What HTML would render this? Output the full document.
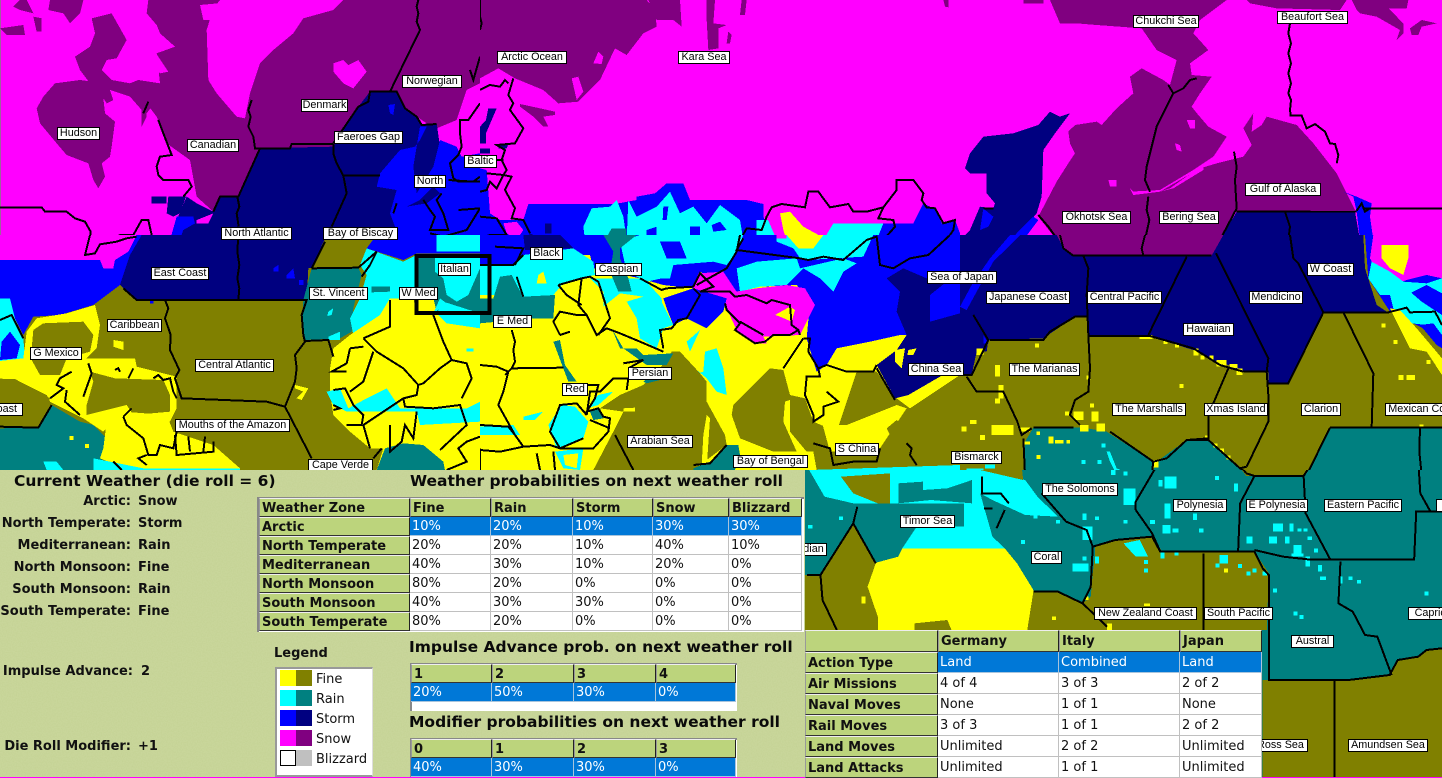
<!DOCTYPE html>
<html><head><meta charset="utf-8"><title>Weather</title>
<style>
html,body{margin:0;padding:0;width:1442px;height:777px;overflow:hidden;background:#f0f}
#map{position:absolute;left:0;top:0}
.y{fill:#ff0}.o{fill:#808000}.c{fill:#0ff}.t{fill:#008080}.b{fill:#00f}.n{fill:#000080}.m{fill:#f0f}.p{fill:#800080}
.l{fill:none;stroke:#000;stroke-width:2;vector-effect:non-scaling-stroke}
.L{position:absolute;box-sizing:border-box;height:13px;margin-top:1px;background:#fff;border:1px solid #000;font:10.8px/11px "Liberation Sans",sans-serif;color:#000;text-align:center;white-space:nowrap;overflow:hidden}
#panel{position:absolute;left:0;top:470px;width:805px;height:307px;background:#c9d69b;overflow:hidden}
.T{position:absolute;font:bold 15.5px/18px "DejaVu Sans",sans-serif;color:#0a0a0a;white-space:nowrap}
.K{position:absolute;margin-top:1px;font:bold 13px/16px "DejaVu Sans",sans-serif;color:#111;white-space:nowrap;text-align:right;width:131px;left:0}
.V{position:absolute;margin-top:1px;font:bold 13px/16px "DejaVu Sans",sans-serif;color:#111;white-space:nowrap;left:138px}
table{position:absolute;border-collapse:separate;border-spacing:0;table-layout:fixed;font:13px/15px "DejaVu Sans",sans-serif;color:#111}
td{box-sizing:border-box;padding:1px 0 0 2px;white-space:nowrap;overflow:hidden;background:#fff;border-right:1px solid #c0c0c0;border-bottom:1px solid #c0c0c0}
td.h,tr.s td.h{background:#bcd47c;color:#111;font-weight:bold;border-top:1px solid #eee;border-left:1px solid #999;border-right:1px solid #222;border-bottom:1px solid #333;padding-left:2px}
tr.s td{background:#0078d7;color:#fff;border-right:1px solid #a8c4dc;border-bottom:1px solid #a8c4dc}
</style></head><body>
<svg id="map" width="1442" height="777" viewBox="0 0 1442 777" shape-rendering="crispEdges">
<rect width="1442" height="777" fill="#f0f"/>
<rect x="0" y="0" width="1" height="470" fill="#a060a0"/>

<!-- Q1 -->
<svg x="0" y="0" width="480" height="240" viewBox="0 0 1440 720">
<polygon class="p" points="445,0 1440,0 1440,260 1400,290 1370,360 1310,385 1280,370 1250,350 1210,320 1190,275 1110,275 1075,320 1000,440 780,445 715,590 660,590 640,635 590,590 570,480 500,430 470,350 440,310 440,350 425,380 425,330 480,250 470,160 525,140 480,100 470,75 440,40"/>
<polygon class="m" points="620,90 640,25 660,0 1030,0 1000,30 910,55 880,100 820,150 780,190 750,280 735,355 710,350 650,280 625,240"/>
<polygon class="m" points="600,15 655,10 650,60 610,60"/>
<polygon class="m" points="1000,190 1030,180 1045,195 1075,180 1100,215 1060,265 1030,250 1000,215"/>
<polygon class="m" points="430,170 465,155 505,215 480,220"/>
<polygon class="p" points="165,250 240,240 310,250 330,270 340,300 320,310 310,295 315,340 345,365 335,440 330,470 305,490 315,530 295,565 280,540 265,490 200,465 170,430 120,370 110,325 130,290"/>
<polygon class="p" points="275,55 335,40 380,120 350,175 320,180 305,210 335,240 390,250 415,240 480,250 470,300 440,340 425,330 390,290 330,270 270,250 240,210 225,170 270,140 285,100"/>
<polygon class="p" points="40,20 60,0 80,0 100,40 60,30"/>
<polygon class="p" points="0,85 70,75 75,105 20,105"/>
<polygon class="p" points="100,50 125,55 125,95 110,95"/>
<polygon class="p" points="150,0 250,0 240,40 210,70 190,40 145,30"/>
<polygon class="m" points="1440,250 1400,270 1370,360 1315,385 1320,420 1370,440 1385,470 1440,460"/>
<polygon class="n" points="1110,275 1190,275 1215,325 1250,350 1265,375 1310,370 1320,440 1380,560 1200,640 1170,720 510,720 530,660 560,590 590,610 640,635 660,590 715,590 780,445 1000,440 1075,320"/>
<polygon class="b" points="1260,380 1280,380 1260,420 1245,440 1200,450 1140,520 1130,560 1190,570 1170,640 1200,720 1440,720 1440,460 1385,470 1370,440 1320,420 1300,500 1250,580 1240,500"/>
<polygon class="b" points="1165,315 1185,312 1180,345 1170,340"/>
<polygon class="b" points="510,720 530,650 580,650 585,670 550,690 540,720"/>
<polygon class="b" points="415,710 510,710 510,720 412,720"/>
<polygon class="n" points="455,590 500,590 500,610 455,610"/>
<polygon class="n" points="505,590 558,590 540,640 520,650 500,640"/>
<polygon class="m" points="590,660 640,640 625,670 590,670"/>
<polygon class="n" points="1220,620 1260,600 1300,560 1320,580 1280,610"/>
<polyline class="l" points="1255,0 1250,20 1255,40 1250,65 1260,90 1170,275"/>
<polyline class="l" points="755,300 745,330 752,350 745,380 760,410 765,445 870,445 875,432 1000,432"/>
<polyline class="l" points="780,445 715,590 660,590 640,635"/>
<polyline class="l" points="1000,432 1000,460 1010,490 1030,527 1040,580 995,680"/>
<polyline class="l" points="1030,527 1140,527"/>
<polyline class="l" points="712,590 718,620 710,640 716,680"/>
<polyline class="l" points="1000,430 1075,320 1105,305 1110,275 1190,275 1215,325 1250,350 1265,375 1310,372"/>
<polyline class="l" points="475,360 490,400 515,465 480,470 470,500 475,525 490,540 565,540 575,560 550,590"/>
<polyline class="l" points="0,622 125,622 135,635 200,635 225,655 255,665 272,695 272,720"/>
<polyline class="l" points="340,720 360,705 400,705 425,660 445,660 455,705"/>
<polyline class="l" points="445,305 430,340"/>
<polyline class="l" points="1440,310 1405,360 1380,360 1380,400 1385,440 1375,465 1350,490 1360,535 1375,545 1440,545"/>
<polyline class="l" points="1410,210 1420,240 1440,170"/>
<polyline class="l" points="1270,600 1290,630 1305,650 1290,690 1345,690 1330,640 1310,600 1325,580"/>
<polyline class="l" points="1345,540 1420,545 1440,530"/>
<polyline class="l" points="1375,630 1440,625 1400,690 1330,710 1290,700"/>
<polyline class="l" points="1190,610 1180,640"/>
</svg>

<!-- Q2 -->
<svg x="480" y="0" width="480" height="240" viewBox="0 0 1440 720">
<polygon class="p" points="0,0 500,0 525,30 530,80 490,100 440,165 405,145 360,240 325,275 295,305 235,310 190,270 105,235 55,205 0,235"/>
<polygon class="p" points="505,0 600,0 605,80 580,60 530,60"/>
<polygon class="m" points="340,190 355,155 370,170 365,192"/>
<polygon class="m" points="275,235 295,230 310,275 290,300"/>
<polygon class="p" points="680,0 705,0 700,70 740,75 715,85 715,145 685,150 680,60"/>
<polygon class="p" points="785,0 800,0 795,45 780,45"/>
<polygon class="p" points="1390,0 1405,0 1405,22 1395,20"/>
<polygon class="p" points="745,95 755,105 750,130 740,130"/>
<polygon class="p" points="120,312 180,325 225,335 225,345 190,350 205,380 190,380 160,350 120,320"/>
<polygon class="b" points="0,505 20,510 25,575 30,640 60,660 130,660 145,612 405,612 470,600 470,590 525,580 560,550 610,550 630,600 800,600 850,612 850,650 880,720 0,720"/>
<polygon class="m" points="25,550 75,570 105,630 95,655 60,660 30,640"/>
<polygon class="m" points="70,670 110,665 130,690 110,720 80,700"/>
<polygon class="n" points="0,380 18,360 25,325 50,325 18,400 18,430 0,430"/>
<polygon class="n" points="0,445 30,445 30,460 0,460"/>
<polygon class="n" points="55,432 85,432 80,445 55,445"/>
<polygon class="b" points="1000,720 1060,670 1300,670 1330,610 1370,630 1385,670 1425,660 1440,700 1440,720"/>
<polygon class="c" points="310,680 335,625 390,620 410,600 430,650 440,720 315,720"/>
<polygon class="c" points="445,600 470,650 530,620 570,575 600,640 640,620 680,670 720,615 780,660 790,720 440,720"/>
<polygon class="c" points="830,660 880,660 890,720 830,720"/>
<polygon class="c" points="1030,720 1060,670 1210,670 1190,720"/>
<polygon class="t" points="375,720 395,685 440,685 440,720"/>
<polygon class="m" points="860,650 875,622 905,612 975,622 985,575 1015,575 1050,622 1105,612 1120,635 1160,635 1210,622 1250,620 1300,670 1060,670 1030,720 890,720"/>
<polygon class="y" points="900,640 930,635 970,680 1025,710 1025,720 920,720 910,690"/>
<polygon class="b" points="500,690 530,680 530,705 500,705"/>
<polygon class="b" points="550,620 565,620 560,660 548,660"/>
<polygon class="b" points="630,680 660,680 660,720 630,720"/>
<polygon class="b" points="695,675 720,665 740,690 700,695"/>
<polygon class="n" points="135,720 150,700 170,710 170,720"/>
<polygon class="n" points="195,670 215,670 215,700 195,700"/>
<polygon class="n" points="195,710 230,710 230,720 195,720"/>
<polyline class="l" points="100,235 85,285 100,310 90,330 130,385 105,430 50,435 75,450 65,480 80,510 70,525 95,530 75,570 105,625 95,655 130,660 150,700"/>
<polyline class="l" points="0,270 30,255 60,260 75,240 85,250"/>
<polyline class="l" points="0,0 0,50 5,70 0,90"/>
<polyline class="l" points="0,480 70,480"/>
<polyline class="l" points="20,520 70,525 50,565 30,545 20,570 0,575"/>
<polyline class="l" points="0,650 50,655 80,705 30,705 0,715"/>
<polyline class="l" points="780,720 800,685 845,690 860,650 875,622 905,612 975,622 985,575 1015,575 1050,622 1105,612 1120,635 1160,635 1210,622 1195,655 1240,660 1245,680 1210,720"/>
<polyline class="l" points="1210,622 1250,570 1250,540 1300,540 1330,580 1325,600 1340,622 1365,625 1390,670 1425,660 1420,690 1400,720"/>
</svg>

<!-- Q3 -->
<svg x="960" y="0" width="482" height="240" viewBox="0 0 1446 720">
<polygon class="p" points="270,0 800,0 720,60 700,100 745,150 690,190 695,225 755,230 720,280 695,320 715,345 745,380 800,410 760,470 700,510 600,570 510,575 450,545 370,495 325,490 345,460 330,430 325,395 345,375 410,365 425,375 470,325 520,280 510,230 545,205 610,240 630,255 650,180 590,150 545,85 410,75 350,70 300,70"/>
<polygon class="p" points="850,385 880,340 875,395 905,375 920,350 1010,375 1060,430 1130,520 1185,630 830,632 775,720 290,720 235,650 290,545 325,490 370,495 450,545 510,575 600,575 720,505 770,490 810,480 850,470 875,435"/>
<polygon class="m" points="510,565 520,575 600,575 630,565 700,515 730,500 730,510 640,565 600,575 520,585"/>
<polygon class="m" points="445,540 470,540 470,560 450,560"/>
<polygon class="m" points="645,430 660,435 665,455 650,450"/>
<polygon class="m" points="680,360 705,360 705,385 690,385"/>
<polygon class="p" points="860,0 1160,0 1140,30 950,25 870,10"/>
<polygon class="p" points="1175,0 1345,0 1340,25 1285,25 1330,70 1330,100 1310,120 1320,90 1250,50 1200,40 1190,30"/>
<polygon class="p" points="1350,85 1385,60 1430,70 1385,80 1375,105 1355,105"/>
<polygon class="p" points="190,0 250,0 250,10 190,10"/>
<polygon class="n" points="235,375 270,335 300,350 330,340 285,400 250,450 245,590 230,640 180,700 150,720 0,720 30,690 60,620 100,625 105,610 80,580 80,520 30,520 15,505 30,460 70,410 160,400"/>
<polygon class="b" points="70,625 100,650 85,680 60,690"/>
<polygon class="b" points="150,720 220,650 235,660 190,720"/>
<polygon class="b" points="0,710 30,710 20,720 0,720"/>
<polygon class="n" points="830,635 1185,635 1200,720 780,720"/>
<polygon class="b" points="1150,575 1190,590 1235,610 1230,650 1240,720 1200,720 1190,635 1180,590"/>
<polyline class="l" points="990,70 985,100 993,130 985,160 993,190 985,220 993,250 985,280 993,300 990,330 992,347 1025,347 1040,385 1065,372 1095,395 1110,430 1125,432 1135,465 1130,490"/>
<polyline class="l" points="1210,625 1446,625"/>
<polyline class="l" points="1190,632 1205,610 1215,635 1230,625"/>
<polyline class="l" points="710,235 690,240 670,265 640,280 590,380 575,440 560,500 555,540 570,575"/>
<polyline class="l" points="565,590 560,630 568,660 555,720"/>
<polyline class="l" points="625,255 640,280"/>
<polyline class="l" points="822,455 830,500 825,540 830,625 780,720"/>
<polyline class="l" points="235,645 265,680 290,715"/>
<polyline class="l" points="830,635 1190,635"/>
<polyline class="l" points="975,635 990,680 985,720"/>
<polyline class="l" points="70,625 100,625"/>
</svg>

<!-- Q4 -->
<svg x="0" y="235" width="480" height="240" viewBox="0 0 1440 720">
<rect width="1440" height="720" class="o"/>
<polygon class="b" points="0,0 430,0 390,60 360,150 280,210 180,240 100,245 70,300 45,250 10,250 0,260"/>
<polygon class="m" points="0,0 410,0 385,50 345,75 340,100 310,100 300,75 0,75"/>
<polygon class="n" points="425,0 980,0 935,98 925,100 920,195 410,195 360,150 390,60"/>
<polygon class="b" points="450,195 460,195 460,205 450,205"/>
<polygon class="b" points="820,100 835,90 835,110 820,110"/>
<polygon class="b" points="860,120 880,100 885,130 860,130"/>
<polygon class="b" points="897,135 910,135 910,150 897,150"/>
<polygon class="c" points="0,190 30,190 45,250 70,310 75,370 0,380"/>
<polygon class="b" points="5,320 30,290 60,330 50,370 0,375"/>
<polygon class="y" points="0,378 70,370 80,290 110,250 200,235 285,210 300,270 290,340 260,370 405,370 410,395 530,425 530,520 510,560 340,560 310,590 250,550 150,500 140,480 60,440 0,430"/>
<polygon class="o" points="100,285 130,265 250,260 280,300 270,350 200,370 180,420 120,420 95,375 95,340"/>
<polygon class="o" points="260,510 280,440 270,410 345,430 490,435 510,480 510,530 400,540 380,510 260,540"/>
<polygon class="o" points="0,432 45,432 150,490 115,575 0,575"/>
<polygon class="o" points="325,310 370,300 400,370 340,370"/>
<polygon class="y" points="340,315 370,320 370,345 340,335"/>
<polygon class="t" points="0,580 115,578 155,510 240,560 280,570 320,610 305,680 280,705 0,705"/>
<polygon class="y" points="310,640 320,560 370,530 500,540 520,590 640,630 720,700 420,705 350,690 300,670"/>
<polygon class="c" points="280,670 430,700 720,700 720,705 280,705"/>
<polygon class="c" points="130,680 170,680 190,705 140,705"/>
<polygon class="y" points="208,603 220,603 220,615 208,615"/>
<polygon class="y" points="255,627 267,627 267,639 255,639"/>
<polygon class="o" points="400,495 440,495 440,505 400,505"/>
<polygon class="t" points="910,195 935,100 1075,98 1085,120 1060,220 1055,290 1020,310 915,315 905,280"/>
<polygon class="c" points="1080,90 1100,40 1210,80 1250,60 1250,190 1170,195 1140,240 1060,300 1050,250 1080,190 1100,120"/>
<polygon class="c" points="985,230 1000,220 995,240 982,243"/>
<polygon class="c" points="985,305 1020,290 1020,315 985,315"/>
<polygon class="t" points="1115,155 1170,155 1170,170 1115,172"/>
<polygon class="b" points="1130,0 1440,0 1440,55 1250,55 1210,75 1100,40"/>
<polygon class="c" points="1310,0 1440,0 1440,50 1310,50"/>
<polygon class="y" points="990,400 1000,340 1050,300 1140,240 1170,190 1240,190 1250,235 1440,235 1440,705 1130,705 1150,640 1110,640 1050,590 1000,540 990,470"/>
<polygon class="t" points="1250,60 1440,60 1440,280 1340,265 1310,235 1250,235"/>
<polygon class="c" points="1305,60 1440,60 1440,100 1405,180 1370,200 1340,180 1330,130 1305,110"/>
<polygon class="y" points="1250,190 1300,190 1310,230 1250,235"/>
<polygon class="c" points="1320,190 1340,205 1300,235"/>
<polygon class="c" points="1310,235 1330,200 1440,235 1440,280 1340,265"/>
<polygon class="c" points="980,470 1020,460 1045,520 1100,490 1160,460 1200,520 1260,520 1400,520 1440,500 1440,560 1260,570 1250,530 1040,530 1000,510"/>
<polygon class="t" points="1130,705 1155,640 1210,625 1270,630 1330,680 1335,705"/>
<polygon class="c" points="1400,340 1420,340 1420,350 1400,350"/>
<polygon class="y" points="885,450 925,460 905,495 890,490 910,470 885,460"/>
<polyline class="l" points="715,0 712,50 718,90 712,130 718,160 715,195"/>
<polyline class="l" points="370,160 410,195 920,195 905,240 910,300 915,320 885,360 890,400 885,440 855,515 800,500 545,490 525,430 538,405 510,345 512,300 495,250 505,220 495,195"/>
<polyline class="l" points="855,515 935,670"/>
<polyline class="l" points="915,318 985,315 1000,365"/>
<polyline class="l" points="935,100 1075,98 1130,50 1110,90 1085,125"/>
<polyline class="l" points="935,100 975,20"/>
<polyline class="l" points="0,575 115,578 155,510"/>
<polyline class="l" points="0,255 35,240 70,310"/>
<polyline class="l" points="270,0 255,60 285,55 300,28 350,20 380,10 410,5"/>
<polyline class="l" points="265,385 275,415 250,485"/>
<polyline class="l" points="215,410 180,430 170,450 190,460 150,490"/>
<polyline class="l" points="200,465 195,500 240,540"/>
<polyline class="l" points="345,405 355,400 360,410"/>
<polyline class="l" points="400,400 385,430"/>
<polyline class="l" points="460,430 475,420 490,435 510,430 520,470 530,490"/>
<polyline class="l" points="1090,310 1130,350 1170,375 1210,400 1255,450 1250,480 1210,490 1090,570"/>
<polyline class="l" points="1090,310 1170,275 1170,195"/>
<polyline class="l" points="1300,240 1330,320 1355,375 1400,385 1415,430 1385,490"/>
<polyline class="l" points="1355,375 1320,400 1270,445 1255,450"/>
<polyline class="l" points="1050,340 1090,335"/>
<polyline class="l" points="1050,340 1040,385 995,410 1040,410"/>
<polyline class="l" points="1120,350 1090,440 1050,470"/>
<polyline class="l" points="1000,465 1035,460 1060,510 1090,540 1085,570 1040,570"/>
<polyline class="l" points="1210,490 1215,515 1300,520 1380,510 1400,570 1320,645"/>
<polyline class="l" points="1090,570 1110,640"/>
<polyline class="l" points="1170,570 1170,650 1205,620 1215,570 1240,610 1250,530"/>
<polyline class="l" points="1440,605 1400,620 1375,640 1400,680 1340,705"/>
<polyline class="l" points="1000,510 1020,520 1000,525"/>
<polyline class="l" points="370,545 380,570 430,610 445,660 470,660 480,630 520,640 530,590"/>
<polyline class="l" points="370,545 395,520"/>
<polyline class="l" points="525,600 530,660 640,650 640,620"/>
<polyline class="l" points="565,605 570,650"/>
<polyline class="l" points="615,605 610,650"/>
<polyline class="l" points="440,660 415,670 440,690"/>
<polyline class="l" points="340,680 365,705"/>
<polyline class="l" points="1120,670 1145,640"/>
</svg>

<!-- Q5 -->
<svg x="480" y="235" width="480" height="240" viewBox="0 0 1440 720">
<rect width="1440" height="720" class="y"/>
<polygon class="b" points="0,0 1440,0 1440,300 1260,300 1170,320 1070,340 1040,390 1010,410 980,310 990,200 950,150 840,155 770,170 660,110 640,160 550,150 480,130 340,100 330,60 130,60 100,90 0,90"/>
<polygon class="n" points="130,0 240,0 280,40 135,45"/>
<polygon class="c" points="100,90 130,60 280,40 340,80 345,120 300,130 245,150 220,180 100,190 70,180 0,180 0,90"/>
<polygon class="t" points="60,125 95,120 110,150 130,185 225,180 220,250 160,250 0,265 0,190 40,190"/>
<polygon class="y" points="175,120 190,110 200,145 170,145"/>
<polygon class="c" points="330,130 490,130 545,190 550,280 530,340 480,310 470,250 440,200 490,185 420,175 370,215 370,170"/>
<polygon class="c" points="420,20 480,0 790,0 770,50 740,90 700,80 580,90 570,130 545,130 500,140 440,110"/>
<polygon class="b" points="540,20 600,20 620,70 560,70"/>
<polygon class="t" points="370,0 470,0 420,40 420,70 445,130 455,170 415,170 390,110 400,50"/>
<polygon class="c" points="890,0 1180,0 1150,65 980,75 960,70 940,40 890,20"/>
<polygon class="y" points="920,0 1030,0 1000,40 955,40"/>
<polygon class="m" points="890,0 920,0 920,10 890,10"/>
<polygon class="c" points="770,100 830,80 950,70 960,100 1090,70 1130,85 1090,110 1060,170 1020,130 970,100 920,150 840,155 780,170"/>
<polygon class="m" points="655,115 730,110 770,170 830,160 920,150 975,160 1005,210 970,280 960,300 850,305 860,325 820,325 770,285 740,220 735,200 660,190 635,170"/>
<polygon class="y" points="885,240 930,215 945,225 935,260 900,245"/>
<polygon class="y" points="870,315 905,305 910,318 865,320"/>
<polygon class="b" points="550,190 640,160 740,190 730,230 680,280 620,250 580,270 560,220"/>
<polygon class="c" points="545,200 580,270 550,280"/>
<polygon class="c" points="620,320 660,285 630,350"/>
<polygon class="c" points="675,350 710,340 730,400 740,480 710,470 680,430 615,375 640,420 670,410"/>
<polygon class="o" points="360,520 420,480 490,450 540,400 575,350 600,350 660,415 680,440 680,500 735,600 740,630 640,705 340,705 400,590 430,530"/>
<polygon class="y" points="430,520 465,518 465,530 430,530"/>
<polygon class="o" points="760,510 870,400 910,405 930,480 975,490 1000,560 1070,590 1130,410 1190,410 1250,490 1290,520 1440,420 1440,705 1010,705 1000,650 880,650 780,610 755,540"/>
<polygon class="y" points="915,500 930,495 930,590 980,650 950,650 910,560"/>
<polygon class="y" points="1020,540 1060,570 1100,570 1250,510 1280,520 1200,640 1050,650"/>
<polygon class="o" points="1220,580 1250,555 1280,580 1240,620"/>
<polygon class="y" points="670,600 680,540 690,550 680,700 665,690"/>
<polygon class="t" points="640,700 690,680 740,630 775,630 780,660 765,705 640,705"/>
<polygon class="n" points="1220,130 1270,100 1340,130 1400,140 1350,180 1350,260 1440,235 1440,390 1285,480 1245,490 1190,390 1250,345 1280,300 1250,230 1260,170"/>
<polygon class="y" points="1245,345 1275,340 1265,400 1245,380"/>
<polygon class="y" points="1285,345 1310,340 1300,360 1282,360"/>
<polygon class="t" points="220,320 240,315 255,390 290,440 265,440"/>
<polygon class="t" points="395,280 420,340 470,340 490,360 580,355 560,390 500,390 430,340"/>
<polygon class="t" points="500,445 560,430 540,400 490,440"/>
<polygon class="c" points="205,570 245,510 285,515 325,560 310,610 230,640"/>
<polygon class="c" points="0,575 100,570 120,600 0,600"/>
<polygon class="c" points="225,650 310,640 300,705 250,700"/>
<polygon class="y" points="250,660 295,655 290,700 255,690"/>
<polygon class="c" points="990,705 1440,690 1440,720 990,720"/>
<polygon class="c" points="130,545 190,530 165,555 130,555"/>
<polygon class="c" points="320,520 355,480 400,470 355,510"/>
<polygon class="t" points="330,530 360,520 370,550 340,555"/>
<polyline class="l" points="95,285 105,320 100,345 105,380 95,400 250,398"/>
<polyline class="l" points="0,390 50,395 85,410 70,470 55,510 105,600 130,635 210,630 240,640 310,610"/>
<polyline class="l" points="95,400 75,420"/>
<polyline class="l" points="0,570 85,575 105,600"/>
<polyline class="l" points="0,645 60,650 130,635"/>
<polyline class="l" points="170,655 180,705"/>
<polyline class="l" points="220,650 225,705"/>
<polyline class="l" points="240,300 220,260 240,230 290,240 320,240 350,300 380,280 420,295 480,320 550,350"/>
<polyline class="l" points="240,300 270,290"/>
<polyline class="l" points="110,125 130,185"/>
<polyline class="l" points="0,90 100,90 130,60"/>
<polyline class="l" points="235,150 305,130 330,125 355,140 390,250 355,300"/>
<polyline class="l" points="305,130 295,210 320,240"/>
<polyline class="l" points="305,210 260,180 235,150"/>
<polyline class="l" points="480,130 545,165 560,160 640,155 660,115 700,155 660,170 750,170 765,185 800,180 860,205 875,195 930,210 935,270 955,285 960,300"/>
<polyline class="l" points="640,160 660,180 620,250 595,255 575,280 540,285 550,340"/>
<polyline class="l" points="735,205 740,225 780,265 765,285 825,325 855,320 880,300 930,300 955,285"/>
<polyline class="l" points="780,260 850,300"/>
<polyline class="l" points="970,310 910,400"/>
<polyline class="l" points="970,310 990,310 985,350 1015,400 1040,390 1100,410 1180,410 1190,390"/>
<polyline class="l" points="1015,400 1020,425 980,425 975,480 1000,540 1000,560 1030,540 1030,515 1075,500 1040,470"/>
<polyline class="l" points="1190,400 1245,495"/>
<polyline class="l" points="780,0 770,50 740,100 650,150"/>
<polyline class="l" points="790,10 770,45 960,70 985,75 1030,65 1090,75 1160,15 1190,5 1200,90 1240,100 1290,70 1345,60 1410,0"/>
<polyline class="l" points="405,600 460,705"/>
<polyline class="l" points="640,690 690,685 740,630"/>
<polyline class="l" points="1000,625 1050,640 1060,690 1120,680 1190,680 1200,640"/>
<polyline class="l" points="1280,625 1295,640 1290,660 1310,690"/>
<polyline class="l" points="445,430 400,430 360,470 330,470 320,540"/>
<polyline class="l" points="320,450 355,450 345,490 320,530 355,520 370,545 390,550 385,590 340,640 240,640 210,590 240,510 290,505 320,540"/>
<polyline class="l" points="330,555 390,580"/>
<polyline class="l" points="445,430 440,465"/>
<polyline class="l" points="430,385 490,375 445,400"/>
<polyline class="l" points="0,640 0,705"/>
<polyline class="l" points="45,35 130,40 105,90"/>
<polyline class="l" points="0,90 50,90"/>
</svg>

<!-- Q6 -->
<svg x="960" y="235" width="482" height="240" viewBox="0 0 1446 720">
<rect width="1446" height="720" class="o"/>
<polygon class="n" points="0,0 1210,0 1215,100 1250,210 1280,230 1090,232 985,445 925,445 925,410 850,410 805,390 770,380 700,345 620,320 560,300 385,300 380,245 345,245 250,310 85,315 80,350 50,350 35,420 0,420"/>
<polygon class="p" points="290,0 790,0 755,62 340,62 310,40"/>
<polygon class="b" points="0,215 35,150 90,70 150,0 180,0 100,80 50,170 20,225"/>
<polygon class="b" points="70,300 85,325 70,325"/>
<polygon class="b" points="1215,0 1446,0 1446,330 1410,290 1290,230 1225,130"/>
<polygon class="m" points="1240,0 1446,0 1446,130 1400,120 1340,135 1280,155 1230,70"/>
<polygon class="y" points="1265,30 1345,30 1345,70 1330,120 1290,100 1265,70"/>
<polygon class="c" points="1225,130 1235,80 1290,110 1330,140 1400,145 1446,130 1446,175 1400,150 1350,175 1300,180 1260,180"/>
<polygon class="c" points="1290,180 1350,170 1385,200 1446,240 1446,330 1400,270 1310,260"/>
<polygon class="y" points="1290,220 1320,225 1370,280 1446,370 1446,420 1400,350 1350,340 1310,260"/>
<polygon class="b" points="1380,270 1420,265 1446,300 1446,340 1430,330"/>
<polygon class="t" points="190,720 195,620 220,578 370,578 440,590 580,680 575,720"/>
<polygon class="t" points="575,720 590,680 680,615 745,615 840,700 870,720"/>
<polygon class="t" points="1040,720 1110,578 1446,578 1446,720"/>
<polygon class="c" points="440,650 450,650 470,700 500,712 500,720 470,720 450,680"/>
<path class="y" d="M225 325h12v12h-12zM658 447h12v12h-12zM380 422h12v12h-12zM105 390h15v35h-15zM115 450h15v40h-15zM105 490h15v15h-15zM30 555h20v12h-20zM95 570h65v30h-65zM180 578h30v12h-30zM5 575h15v15h-15zM60 600h15v15h-15zM340 530h30v25h-30zM395 530h20v30h-20zM410 565h25v25h-25zM360 570h25v20h-25zM390 505h12v12h-12zM315 530h12v12h-12zM1265 265h12v12h-12zM1300 315h12v12h-12zM1315 420h15v15h-15zM1340 420h25v15h-25zM1400 375h12v12h-12zM538 300h40v12h-40zM610 315h12v12h-12zM645 325h12v12h-12zM700 340h15v22h-15zM722 362h12v12h-12zM748 362h12v12h-12zM770 375h30v20h-30zM808 387h25v12h-25zM830 400h18v20h-18zM580 675h15v22h-15zM735 602h12v12h-12zM760 625h12v12h-12zM780 640h12v12h-12zM800 662h12v12h-12zM1378 568h12v12h-12zM50 340h20v20h-20zM190 620h20v8h-20zM230 590h10v10h-10zM265 605h15v20h-15zM285 615h25v10h-25zM320 615h10v10h-10zM230 660h12v12h-12z"/>
<path class="c" d="M425 625h12v12h-12zM365 675h12v12h-12zM412 675h12v12h-12zM20 700h50v20h-50zM75 688h30v12h-30z"/>
<polyline class="l" points="370,62 385,100 380,180 385,300 390,400 385,470 345,495 330,540 360,570"/>
<polyline class="l" points="300,0 310,40 340,62 755,62"/>
<polyline class="l" points="555,0 545,40 550,62"/>
<polyline class="l" points="680,65 565,300"/>
<polyline class="l" points="768,55 925,370 920,410 925,480 925,560 860,695"/>
<polyline class="l" points="925,410 850,410"/>
<polyline class="l" points="805,400 745,540 745,610 680,615"/>
<polyline class="l" points="90,315 250,315 270,290 345,245 385,245"/>
<polyline class="l" points="385,303 570,303 700,340 780,390 850,410"/>
<polyline class="l" points="1090,232 985,445 925,445"/>
<polyline class="l" points="1090,232 1285,232 1340,218 1350,232 1425,230 1446,270"/>
<polyline class="l" points="1150,232 1240,415 1235,575"/>
<polyline class="l" points="990,0 1000,70 1015,85 1090,232"/>
<polyline class="l" points="1110,578 1446,578"/>
<polyline class="l" points="1040,720 1110,578"/>
<polyline class="l" points="1380,578 1378,650 1385,720"/>
<polyline class="l" points="220,578 340,578"/>
<polyline class="l" points="190,610 195,720"/>
<polyline class="l" points="40,240 85,315 35,420 0,420"/>
<polyline class="l" points="20,425 50,470 130,470 172,560 185,600 215,580"/>
<polyline class="l" points="450,590 580,680 575,720"/>
<polyline class="l" points="580,680 620,670 680,615 745,615 840,700 870,720"/>
<polyline class="l" points="860,695 840,700"/>
</svg>

<!-- Q7 -->
<svg x="800" y="470" width="642" height="307" viewBox="0 30 1568 921" preserveAspectRatio="none">
<rect y="0" width="1568" height="951" class="t"/>
<polygon class="o" points="1090,48 1230,48 1255,0 1060,0"/>
<polygon class="c" points="20,25 280,25 450,30 550,60 580,110 630,170 550,165 470,120 440,100 470,230 500,265 250,265 285,200 400,200 400,130 250,130 130,130 60,110"/>
<polygon class="o" points="100,50 220,40 220,130 190,130 130,100"/>
<polygon class="t" points="240,70 300,65 300,90 360,85 420,60 420,130 320,120 240,130"/>
<polygon class="o" points="60,0 540,0 545,60 440,30 100,25"/>
<polygon class="y" points="250,265 500,265 530,310 570,390 570,420 555,510 190,510 190,470 160,380 180,310 240,290"/>
<polygon class="o" points="280,490 360,480 370,510 280,510"/>
<polygon class="o" points="570,395 630,395 690,430 740,490 750,510 555,510"/>
<polygon class="o" points="50,345 130,190 185,310 165,380 190,470 190,510 90,510 50,420"/>
<polygon class="o" points="0,345 50,345 50,420 90,510 0,510"/>
<polygon class="o" points="720,255 770,240 860,230 885,275 1110,275 1145,340 1140,510 750,510 690,430 710,410 715,340 720,290"/>
<polygon class="o" points="1130,660 1340,660 1440,645 1460,600 1510,590 1530,570 1568,565 1568,951 1130,951"/>
<polygon class="c" points="790,250 830,240 850,290 820,290"/>
<path class="c" d="M890 50h30v35h-30zM875 60h10v20h-10zM1013 48h10v12h-10zM1060 70h10v25h-10zM760 0h10v45h-10zM790 35h10v12h-10zM790 85h30v50h-30zM890 130h15v45h-15zM960 160h10v20h-10zM1010 135h10v12h-10zM855 180h12v12h-12zM885 195h20v25h-20zM910 205h15v12h-15zM975 205h10v12h-10zM1155 190h25v25h-25zM1195 190h10v25h-10zM1215 205h10v10h-10zM1230 205h10v10h-10zM1090 230h15v20h-15zM1145 230h20v20h-20zM1185 230h10v20h-10zM1240 230h10v10h-10zM1205 255h20v25h-20zM1255 265h10v12h-10zM1200 280h30v10h-30zM1235 290h10v30h-10zM1265 315h10v20h-10zM1270 350h15v10h-15zM1315 350h10v20h-10zM1340 350h10v10h-10zM1360 360h10v10h-10zM1525 395h10v12h-10zM1155 385h10v12h-10zM1205 455h10v12h-10zM1220 465h10v12h-10zM1015 310h10v12h-10zM1025 285h20v25h-20zM1070 312h10v12h-10zM1090 335h10v12h-10zM1105 325h10v12h-10zM1130 335h10v12h-10zM840 300h10v12h-10zM840 325h10v12h-10zM880 275h10v20h-10zM915 275h10v12h-10zM665 310h40v25h-40zM690 200h25v40h-25zM690 160h10v20h-10zM720 170h10v10h-10zM690 290h10v12h-10zM540 240h10v12h-10zM95 170h10v10h-10zM20 195h10v10h-10zM625 180h10v10h-10zM790 180h10v10h-10zM570 155h10v20h-10zM720 290h10v20h-10z"/>
<path class="y" d="M1035 325h10v12h-10zM840 430h15v8h-15zM695 410h10v10h-10zM615 470h10v10h-10zM750 490h12v20h-12zM150 410h10v20h-10z"/>
<polyline class="l" points="140,140 130,190 50,345 17,345"/>
<polyline class="l" points="50,345 55,420 90,510"/>
<polyline class="l" points="130,190 185,310"/>
<polyline class="l" points="480,205 500,150"/>
<polyline class="l" points="570,395 630,395 690,430 750,500"/>
<polyline class="l" points="690,430 710,380 715,260 770,240 860,230 880,275 1110,275 1130,325 1145,345 1145,660 1340,660 1440,645 1460,600 1510,590 1530,570 1568,565"/>
<polyline class="l" points="985,280 985,510"/>
<polyline class="l" points="1305,660 1305,951"/>
<polyline class="l" points="590,100 650,185 700,210 715,260"/>
<polyline class="l" points="820,150 860,220 880,275"/>
<polyline class="l" points="870,20 820,125 820,150"/>
<polyline class="l" points="1110,48 1230,48"/>
<polyline class="l" points="1090,40 1110,48 1075,130 1070,275"/>
<polyline class="l" points="1230,48 1255,0"/>
<polyline class="l" points="1230,48 1235,160 1295,298"/>
<polyline class="l" points="1110,270 1180,290 1240,298 1500,298 1505,155 1540,155 1515,100 1510,0"/>
<polyline class="l" points="1320,305 1315,430 1350,455 1380,525 1410,530 1445,645"/>
<polyline class="l" points="545,0 545,30"/>
<polyline class="l" points="445,50 445,100 490,100 510,130"/>
<polyline class="l" points="450,145 470,145"/>
<polyline class="l" points="1540,155 1568,155"/>
<polyline class="l" points="1065,0 1090,40"/>
</svg>

<!-- Italian box -->
<rect x="416.5" y="256" width="73" height="57" fill="none" stroke="#000" stroke-width="4"/>
</svg>

<div class="L" style="left:1133px;top:14px;width:66px">Chukchi Sea</div>
<div class="L" style="left:1277px;top:10px;width:71px">Beaufort Sea</div>
<div class="L" style="left:1062px;top:210px;width:69px">Okhotsk Sea</div>
<div class="L" style="left:1159px;top:210px;width:60px">Bering Sea</div>
<div class="L" style="left:1245px;top:182px;width:76px">Gulf of Alaska</div>
<div class="L" style="left:497px;top:50px;width:70px">Arctic Ocean</div>
<div class="L" style="left:678px;top:50px;width:52px">Kara Sea</div>
<div class="L" style="left:402px;top:74px;width:60px">Norwegian</div>
<div class="L" style="left:301px;top:98px;width:47px">Denmark</div>
<div class="L" style="left:334px;top:130px;width:69px">Faeroes Gap</div>
<div class="L" style="left:57px;top:126px;width:43px">Hudson</div>
<div class="L" style="left:187px;top:138px;width:52px">Canadian</div>
<div class="L" style="left:414px;top:174px;width:32px">North</div>
<div class="L" style="left:464px;top:154px;width:33px">Baltic</div>
<div class="L" style="left:221px;top:226px;width:71px">North Atlantic</div>
<div class="L" style="left:323px;top:226px;width:75px">Bay of Biscay</div>
<div class="L" style="left:151px;top:266px;width:58px">East Coast</div>
<div class="L" style="left:438px;top:262px;width:33px">Italian</div>
<div class="L" style="left:309px;top:286px;width:59px">St. Vincent</div>
<div class="L" style="left:399px;top:286px;width:39px">W Med</div>
<div class="L" style="left:107px;top:318px;width:55px">Caribbean</div>
<div class="L" style="left:30px;top:346px;width:52px">G Mexico</div>
<div class="L" style="left:195px;top:358px;width:79px">Central Atlantic</div>
<div class="L" style="left:-40px;top:402px;width:63px">Gulf Coast</div>
<div class="L" style="left:175px;top:418px;width:115px">Mouths of the Amazon</div>
<div class="L" style="left:308px;top:458px;width:65px">Cape Verde</div>
<div class="L" style="left:493px;top:314px;width:39px">E Med</div>
<div class="L" style="left:530px;top:246px;width:33px">Black</div>
<div class="L" style="left:595px;top:262px;width:47px">Caspian</div>
<div class="L" style="left:562px;top:382px;width:26px">Red</div>
<div class="L" style="left:628px;top:366px;width:44px">Persian</div>
<div class="L" style="left:627px;top:434px;width:66px">Arabian Sea</div>
<div class="L" style="left:733px;top:454px;width:75px">Bay of Bengal</div>
<div class="L" style="left:835px;top:442px;width:44px">S China</div>
<div class="L" style="left:951px;top:450px;width:51px">Bismarck</div>
<div class="L" style="left:908px;top:362px;width:56px">China Sea</div>
<div class="L" style="left:927px;top:270px;width:70px">Sea of Japan</div>
<div class="L" style="left:986px;top:290px;width:84px">Japanese Coast</div>
<div class="L" style="left:1087px;top:290px;width:75px">Central Pacific</div>
<div class="L" style="left:1249px;top:290px;width:54px">Mendicino</div>
<div class="L" style="left:1307px;top:262px;width:47px">W Coast</div>
<div class="L" style="left:1183px;top:322px;width:51px">Hawaiian</div>
<div class="L" style="left:1009px;top:362px;width:71px">The Marianas</div>
<div class="L" style="left:1112px;top:402px;width:74px">The Marshalls</div>
<div class="L" style="left:1204px;top:402px;width:64px">Xmas Island</div>
<div class="L" style="left:1301px;top:402px;width:40px">Clarion</div>
<div class="L" style="left:1385px;top:402px;width:78px">Mexican Coast</div>
<div class="L" style="left:1042px;top:482px;width:76px">The Solomons</div>
<div class="L" style="left:1173px;top:498px;width:54px">Polynesia</div>
<div class="L" style="left:1246px;top:498px;width:62px">E Polynesia</div>
<div class="L" style="left:1324px;top:498px;width:78px">Eastern Pacific</div>
<div class="L" style="left:1436px;top:498px;width:40px">Cape</div>
<div class="L" style="left:900px;top:514px;width:55px">Timor Sea</div>
<div class="L" style="left:791px;top:542px;width:36px">Indian</div>
<div class="L" style="left:1031px;top:550px;width:31px">Coral</div>
<div class="L" style="left:1094px;top:606px;width:103px">New Zealand Coast</div>
<div class="L" style="left:1204px;top:606px;width:69px">South Pacific</div>
<div class="L" style="left:1408px;top:606px;width:60px">Capricorn</div>
<div class="L" style="left:1291px;top:634px;width:43px">Austral</div>
<div class="L" style="left:1253px;top:738px;width:55px">Ross Sea</div>
<div class="L" style="left:1348px;top:738px;width:80px">Amundsen Sea</div>

<div id="panel">
<svg width="805" height="307" style="position:absolute;left:0;top:0"><filter id="nz" x="0" y="0" width="100%" height="100%"><feTurbulence type="fractalNoise" baseFrequency=".8" numOctaves="2" seed="3"/><feColorMatrix values="0 0 0 0 .45  0 0 0 0 .55  0 0 0 0 .2  0 0 0 .9 -.3"/></filter><rect width="805" height="307" filter="url(#nz)" opacity=".45"/></svg>
<div class="T" style="left:14px;top:2px">Current Weather (die roll = 6)</div>
<div class="T" style="left:410px;top:2px">Weather probabilities on next weather roll</div>
<div class="T" style="left:409px;top:168px">Impulse Advance prob. on next weather roll</div>
<div class="T" style="left:409px;top:243px">Modifier probabilities on next weather roll</div>

<div class="K" style="top:23px">Arctic:</div><div class="V" style="top:23px">Snow</div>
<div class="K" style="top:45px">North Temperate:</div><div class="V" style="top:45px">Storm</div>
<div class="K" style="top:67px">Mediterranean:</div><div class="V" style="top:67px">Rain</div>
<div class="K" style="top:89px">North Monsoon:</div><div class="V" style="top:89px">Fine</div>
<div class="K" style="top:111px">South Monsoon:</div><div class="V" style="top:111px">Rain</div>
<div class="K" style="top:133px">South Temperate:</div><div class="V" style="top:133px">Fine</div>
<div class="K" style="top:193px;width:133px">Impulse Advance:</div><div class="V" style="top:193px;left:141px">2</div>
<div class="K" style="top:268px">Die Roll Modifier:</div><div class="V" style="top:268px">+1</div>

<div class="K" style="top:175px;left:274px;width:auto;text-align:left">Legend</div>
<div style="position:absolute;left:275px;top:197px;width:98px;height:110px;box-sizing:border-box;background:#fff;border:2px solid #999;border-right:1px solid #ddd">
<svg width="40" height="100" style="position:absolute;left:3px;top:1px" shape-rendering="crispEdges">
<rect width="16" height="16" fill="#ff0"/><rect x="16" width="16" height="16" fill="#808000"/>
<rect y="20" width="16" height="16" fill="#0ff"/><rect x="16" y="20" width="16" height="16" fill="#008080"/>
<rect y="40" width="16" height="16" fill="#00f"/><rect x="16" y="40" width="16" height="16" fill="#000080"/>
<rect y="60" width="16" height="16" fill="#f0f"/><rect x="16" y="60" width="16" height="16" fill="#800080"/>
<rect x=".5" y="80.5" width="15" height="15" fill="#fff" stroke="#000"/><rect x="16" y="80" width="16" height="16" fill="#c0c0c0"/>
</svg>
<div style="position:absolute;left:39px;top:1px;font:13px/20px 'DejaVu Sans',sans-serif;color:#111">Fine<br>Rain<br>Storm<br>Snow<br>Blizzard</div>
</div>

<div style="position:absolute;left:257px;top:27px;width:547px;height:135px;background:#fff;border-top:2px solid #888;border-left:2px solid #888;box-sizing:border-box"></div>
<table style="left:259px;top:28px;width:543px">
<colgroup><col style="width:151px"><col style="width:81px"><col style="width:82px"><col style="width:80px"><col style="width:76px"><col style="width:73px"></colgroup>
<tr style="height:19px"><td class="h">Weather Zone</td><td class="h">Fine</td><td class="h">Rain</td><td class="h">Storm</td><td class="h">Snow</td><td class="h">Blizzard</td></tr>
<tr class="s" style="height:19px"><td class="h">Arctic</td><td>10%</td><td>20%</td><td>10%</td><td>30%</td><td>30%</td></tr>
<tr style="height:19px"><td class="h">North Temperate</td><td>20%</td><td>20%</td><td>10%</td><td>40%</td><td>10%</td></tr>
<tr style="height:19px"><td class="h">Mediterranean</td><td>40%</td><td>30%</td><td>10%</td><td>20%</td><td>0%</td></tr>
<tr style="height:19px"><td class="h">North Monsoon</td><td>80%</td><td>20%</td><td>0%</td><td>0%</td><td>0%</td></tr>
<tr style="height:19px"><td class="h">South Monsoon</td><td>40%</td><td>30%</td><td>30%</td><td>0%</td><td>0%</td></tr>
<tr style="height:19px"><td class="h">South Temperate</td><td>80%</td><td>20%</td><td>0%</td><td>0%</td><td>0%</td></tr>
</table>

<div style="position:absolute;left:410px;top:193px;width:327px;height:48px;background:#fff;border-top:2px solid #888;border-left:2px solid #888;box-sizing:border-box"></div>
<table style="left:411px;top:194px;width:325px">
<colgroup><col style="width:81px"><col style="width:82px"><col style="width:82px"><col style="width:80px"></colgroup>
<tr style="height:19px"><td class="h">1</td><td class="h">2</td><td class="h">3</td><td class="h">4</td></tr>
<tr class="s" style="height:19px"><td>20%</td><td>50%</td><td>30%</td><td>0%</td></tr>
</table>

<div style="position:absolute;left:410px;top:268px;width:327px;height:39px;background:#fff;border-top:2px solid #888;border-left:2px solid #888;box-sizing:border-box"></div>
<table style="left:411px;top:269px;width:325px">
<colgroup><col style="width:81px"><col style="width:82px"><col style="width:82px"><col style="width:80px"></colgroup>
<tr style="height:19px"><td class="h">0</td><td class="h">1</td><td class="h">2</td><td class="h">3</td></tr>
<tr class="s" style="height:19px"><td>40%</td><td>30%</td><td>30%</td><td>0%</td></tr>
</table>
</div>

<table style="left:805px;top:630px;width:457px;background:#fff">
<colgroup><col style="width:133px"><col style="width:121px"><col style="width:121px"><col style="width:82px"></colgroup>
<tr style="height:22px"><td class="h"></td><td class="h">Germany</td><td class="h">Italy</td><td class="h">Japan</td></tr>
<tr class="s" style="height:21px"><td class="h">Action Type</td><td>Land</td><td>Combined</td><td>Land</td></tr>
<tr style="height:21px"><td class="h">Air Missions</td><td>4 of 4</td><td>3 of 3</td><td>2 of 2</td></tr>
<tr style="height:21px"><td class="h">Naval Moves</td><td>None</td><td>1 of 1</td><td>None</td></tr>
<tr style="height:21px"><td class="h">Rail Moves</td><td>3 of 3</td><td>1 of 1</td><td>2 of 2</td></tr>
<tr style="height:21px"><td class="h">Land Moves</td><td>Unlimited</td><td>2 of 2</td><td>Unlimited</td></tr>
<tr style="height:21px"><td class="h">Land Attacks</td><td>Unlimited</td><td>1 of 1</td><td>Unlimited</td></tr>
</table>
</body></html>
